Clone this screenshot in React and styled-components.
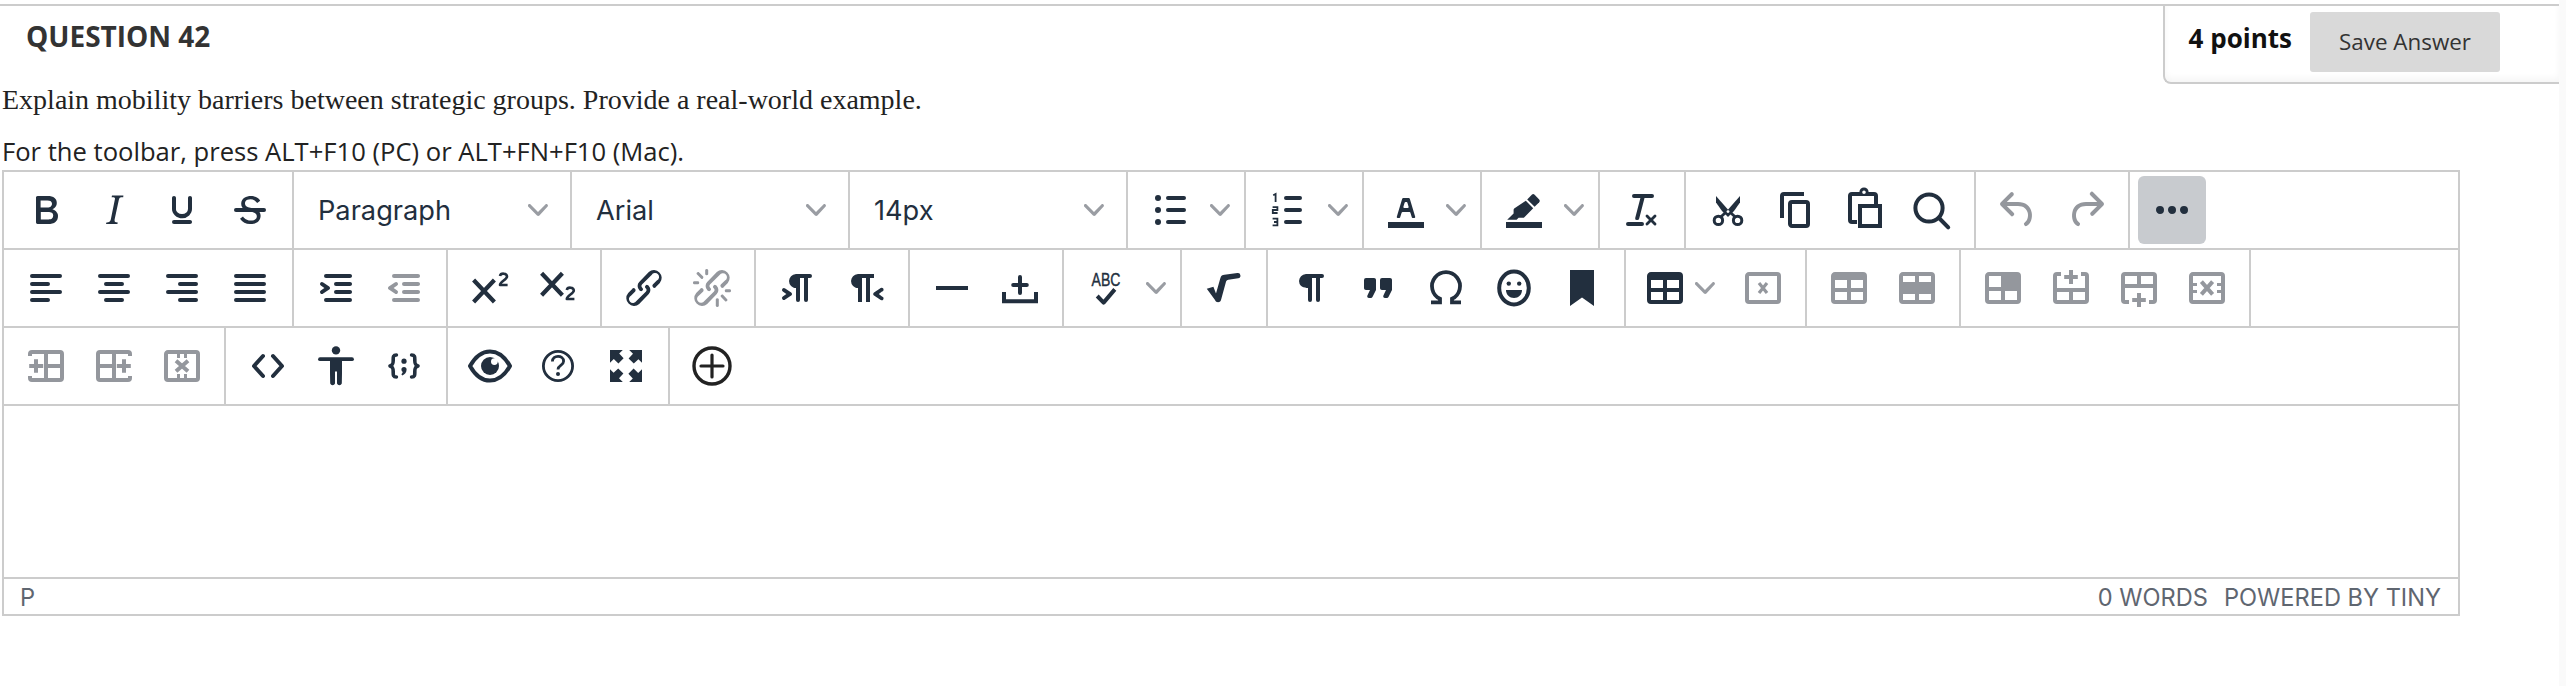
import React from 'react';
import styled, { createGlobalStyle } from 'styled-components';

const Global = createGlobalStyle`
  html, body { margin: 0; padding: 0; background: #fff; overflow: hidden; }
  body { font-family: "Open Sans", "Liberation Sans", sans-serif; color: #222; }
`;
const Page = styled.div`display: flex; width: 2566px; height: 686px; background: #fff;`;
const Main = styled.main`flex: 1; min-width: 0; padding-top: 4px;`;
const Track = styled.div`width: 7px; background: #fafafa;`;
const Header = styled.header`display: flex; justify-content: space-between; align-items: flex-start; height: 78px; border-top: 2px solid #ccc;`;
const Title = styled.h2`margin: 12px 0 0 26px; font: 700 28px/36px "Open Sans", sans-serif; color: #333;`;
const Points = styled.div`display: flex; align-items: flex-start; gap: 18px; height: 78px; box-sizing: border-box; padding: 6px 59px 0 24px; border-left: 2px solid #ccc; border-bottom: 2px solid #ccc; border-bottom-left-radius: 8px; box-shadow: 0 -4px 6px rgba(0,0,0,.04) inset;`;
const PointsLabel = styled.b`font: 700 26px/52px "Open Sans", sans-serif; color: #111;`;
const SaveButton = styled.button`width: 190px; height: 60px; border: 0; border-radius: 3px; background: #d9d9d9; color: #333; font: 400 22.4px/60px "Open Sans", sans-serif; padding: 0;`;
const Prompt = styled.p`margin: 0 0 0 2px; font: 400 28px/32px "Liberation Serif", serif; color: #222; height: 40px; `;
const Hint = styled.p`margin: 0 0 0 2px; font: 400 25.6px/34px "Open Sans", sans-serif; color: #222; height: 46px; padding-top: 11px; box-sizing: border-box;`;
const Editor = styled.section`width: 2458px; margin-left: 2px; box-sizing: border-box; border: 2px solid #ccc; background: #fff;`;
const Row = styled.div`display: flex; height: 78px; box-sizing: border-box; border-bottom: 2px solid #ccc;`;
const Group = styled.div`display: flex; align-items: center; padding: 0 8px; height: 76px; border-right: ${p => p.$last ? '0' : '2px solid #ccc'};`;
const IconBtn = styled.button`
  display: flex; align-items: center; justify-content: center; width: 68px; height: 68px; padding: 0; border: 0; border-radius: 6px;
  background: ${p => p.$active ? '#c8cbcf' : 'transparent'};
  color: ${p => p.$off ? '#94979d' : p.$ink || '#222f3e'};
`;
const Caret = styled.span`display: flex; align-items: center; justify-content: center; width: 32px; height: 68px; color: #9a9da3;`;
const TableMenu = styled.button`display: flex; align-items: center; width: 95px; height: 68px; padding: 0 0 0 7px; border: 0; background: transparent; color: #222f3e; box-sizing: border-box; gap: 6px;`;
const TableCaret = styled.span`display: flex; color: #9a9da3;`;
const Select = styled.button`display: flex; align-items: center; justify-content: space-between; width: 260px; height: 68px; box-sizing: border-box; padding: 2px 14px 0 16px; border: 0; background: transparent; color: #222f3e; font: 400 27.2px/40px Inter, "Liberation Sans", sans-serif;`;
const SelectCaret = styled.span`display: flex; margin-top: -2px; color: #9a9da3;`;
const Body = styled.div`height: 171px;`;
const Status = styled.footer`display: flex; justify-content: space-between; align-items: center; height: 37px; box-sizing: border-box; padding: 2px 17px 0 16px; border-top: 2px solid #ccc; color: #5f6670; font: 400 23.6px/30px Inter, "Liberation Sans", sans-serif;`;
const StatusRight = styled.div`display: flex; gap: 16px;`;

const F = ({ d, ...r }) => <path d={d} fillRule="evenodd" {...r} />;
const S = ({ d, w = 2, ...r }) => <path d={d} fill="none" stroke="currentColor" strokeWidth={w} strokeLinecap="round" strokeLinejoin="round" {...r} />;
const T = 'M5 4h14a2 2 0 0 1 2 2v12a2 2 0 0 1-2 2H5a2 2 0 0 1-2-2V6c0-1.1.9-2 2-2z';
const PIL = 'M10 5h8a1 1 0 0 1 0 2h-1v11a1 1 0 0 1-2 0V7h-2v11a1 1 0 0 1-2 0v-6c-.5 0-1 0-1.4-.3A3.4 3.4 0 0 1 6.8 10a3.3 3.3 0 0 1 0-2.8 3.4 3.4 0 0 1 1.8-1.8L10 5z';
const BAR = 'M3 18h18v3H3z';
const cut = <g><F d="M6 5l7.6 8.6-1.7 1.8-2.9-2.9L6 8.2z" /><S d="M10.4 13.6l-1.9 1.8" w={1.4} /><circle cx="7.2" cy="17.2" r="2.1" fill="none" stroke="currentColor" strokeWidth="1.5" /></g>;

const icons = {
  bold: <F d="M7.8 19c-.3 0-.5 0-.6-.2l-.2-.5V5.7c0-.2 0-.4.2-.5l.6-.2h5c1.5 0 2.7.3 3.5 1 .7.6 1.1 1.4 1.1 2.5a3 3 0 0 1-.6 1.9c-.4.6-1 1-1.6 1.2.4.1.9.3 1.3.6s.8.7 1 1.2c.4.4.5 1 .5 1.6 0 1.3-.4 2.3-1.3 3-.8.7-2.1 1-3.8 1H7.8zm5-8.3c.6 0 1.2-.1 1.6-.5.4-.3.6-.7.6-1.3 0-1.1-.8-1.7-2.3-1.7H9.3v3.5h3.4zm.5 6c.7 0 1.3-.1 1.7-.4.4-.4.6-.9.6-1.5s-.2-1-.7-1.4c-.4-.3-1-.4-2-.4H9.4v3.8h4z" />,
  italic: <F d="M16.7 4.7l-.1.9h-.3c-.6 0-1 0-1.4.3-.3.3-.4.6-.5 1.1l-2.1 9.8v.6c0 .5.4.8 1.4.8h.2l-.2.8H8l.2-.8h.2c1.1 0 1.8-.5 2-1.5l2-9.8.1-.5c0-.6-.4-.8-1.4-.8h-.3l.2-.9h5.8z" />,
  underline: <F d="M16 5c.6 0 1 .4 1 1v5.5a4 4 0 0 1-.4 1.8l-1 1.4a5.3 5.3 0 0 1-5.5 1 5 5 0 0 1-1.6-1c-.5-.4-.8-.9-1.1-1.4a4 4 0 0 1-.4-1.8V6c0-.6.4-1 1-1s1 .4 1 1v5.5c0 .3 0 .6.2 1l.6.7a3.3 3.3 0 0 0 2.2.8 3.4 3.4 0 0 0 2.2-.8c.3-.2.4-.5.6-.8l.2-.9V6c0-.6.4-1 1-1zM8 17h8c.6 0 1 .4 1 1s-.4 1-1 1H8a1 1 0 0 1 0-2z" />,
  strike: <><F d="M15.6 8.5c-.5-.7-1-1.1-1.3-1.3-.6-.4-1.3-.6-2-.6-2.7 0-2.8 1.7-2.8 2.1 0 1.6 1.8 2 3.2 2.3 4.4.9 4.6 2.8 4.6 3.9 0 1.4-.7 4.1-5 4.1A6.2 6.2 0 0 1 7 16.4l1.5-1.1c.4.6 1.6 2 3.7 2 1.6 0 2.5-.4 3-1.2.4-.8.3-2-.8-2.6-.7-.4-1.6-.7-2.9-1-1-.2-3.9-.8-3.9-3.6C7.6 6 10.3 5 12.4 5c2.9 0 4.2 1.6 4.7 2.4l-1.5 1.1z" /><S d="M5 12h14" /></>,
  bullist: <><S d="M11 6h8M11 12h8M11 18h8" /><circle cx="6" cy="6" r="1.5" /><circle cx="6" cy="12" r="1.5" /><circle cx="6" cy="18" r="1.5" /></>,
  numlist: <><S d="M11 6h7M11 12h7M11 18h7" /><S w={.9} d="M4.6 4.6l1.2-.6v4M4.3 10.6h2.4v1.4H4.4v1.5h2.4M4.3 16.3h2.4v3.4H4.3M5 18h1.7" strokeLinecap="butt" strokeLinejoin="miter" /></>,
  forecolor: <><path d={BAR} /><F d="M8.7 16h-.8a.5.5 0 0 1-.5-.6l2.7-9c.1-.3.3-.4.5-.4h2.8c.2 0 .4.1.5.4l2.7 9a.5.5 0 0 1-.5.6h-.8a.5.5 0 0 1-.4-.4l-.7-2.2c0-.3-.3-.4-.5-.4h-3.4c-.2 0-.4.1-.5.4l-.7 2.2c0 .3-.2.4-.4.4zm2.6-7.6l-.6 2a.5.5 0 0 0 .5.6h1.6a.5.5 0 0 0 .5-.6l-.6-2c0-.3-.3-.4-.5-.4h-.4c-.2 0-.4.1-.5.4z" /></>,
  highlight: <><path d={BAR} /><path d="M15.9 4.4a1 1 0 0 1 1.4 0l2.3 2.3a1 1 0 0 1 0 1.4l-2.3 2.3-3.7-3.7z" /><path d="M12.9 7.4l3.7 3.7-4.4 4.5a1 1 0 0 1-.7.3H9.3l-1 1H3.6l3.2-3.2v-1.8a1 1 0 0 1 .3-.7z" /></>,
  removeformat: <F d="M13.2 6a1 1 0 0 1 0 .2l-2.6 10a1 1 0 0 1-1 .8h-.2a.8.8 0 0 1-.8-1l2.6-10H8a1 1 0 1 1 0-2h9a1 1 0 0 1 0 2h-3.8zM5 18h7a1 1 0 0 1 0 2H5a1 1 0 0 1 0-2zm13 1.5L16.5 18 15 19.5a.7.7 0 0 1-1-1l1.5-1.5-1.5-1.5a.7.7 0 0 1 1-1l1.5 1.5 1.5-1.5a.7.7 0 0 1 1 1L17.5 17l1.5 1.5a.7.7 0 0 1-1 1z" />,
  cut: <>{cut}<g transform="matrix(-1 0 0 1 24 0)">{cut}</g><circle cx="12" cy="12.8" r=".7" fill="#fff" /></>,
  copy: <F d="M16 3H6a2 2 0 0 0-2 2v11h2V5h10V3zm1 4H10a2 2 0 0 0-2 2v10c0 1.1.9 2 2 2h7a2 2 0 0 0 2-2V9a2 2 0 0 0-2-2zm0 12H10V9h7v10z" />,
  paste: <F d="M9.7 3a2.3 2.3 0 0 1 4.6 0H17a2 2 0 0 1 2 2v4h-2V5H6v12h2.5v2H6a2 2 0 0 1-2-2V5a2 2 0 0 1 2-2h3.7zM12 2.2a.9.9 0 1 0 0 1.8.9.9 0 0 0 0-1.8zM9 9h12v12H9V9zm2 2v8h8v-8h-8z" />,
  search: <><circle cx="10.5" cy="11" r="6.8" fill="none" stroke="currentColor" strokeWidth="2" /><S d="M15.5 16l4.6 4.7" /></>,
  undo: <F d="M6.4 8H12c3.7 0 6.2 2 6.8 5.1.6 2.7-.4 5.6-2.3 6.8a1 1 0 0 1-1-1.8c1.1-.7 1.8-2.7 1.4-4.6-.5-2.1-2.1-3.5-4.9-3.5H6.4l3.3 3.3a1 1 0 1 1-1.4 1.4l-5-5a1 1 0 0 1 0-1.4l5-5a1 1 0 0 1 1.4 1.4L6.4 8z" />,
  redo: <F d="M17.6 10H12c-2.8 0-4.4 1.4-4.9 3.5-.4 2 .3 3.9 1.4 4.6a1 1 0 1 1-1 1.8c-2-1.2-2.9-4.1-2.3-6.8.6-3 3-5.1 6.8-5.1h5.6l-3.3-3.3a1 1 0 1 1 1.4-1.4l5 5a1 1 0 0 1 0 1.4l-5 5a1 1 0 0 1-1.4-1.4l3.3-3.3z" />,
  more: <F d="M6 10a2 2 0 0 0-2 2c0 1.1.9 2 2 2a2 2 0 0 0 2-2 2 2 0 0 0-2-2zm12 0a2 2 0 0 0-2 2c0 1.1.9 2 2 2a2 2 0 0 0 2-2 2 2 0 0 0-2-2zm-6 0a2 2 0 0 0-2 2c0 1.1.9 2 2 2a2 2 0 0 0 2-2 2 2 0 0 0-2-2z" />,
  left: <S d="M5 6h14M5 10h8M5 14h14M5 18h8" />,
  center: <S d="M5 6h14M8 10h8M5 14h14M8 18h8" />,
  right: <S d="M5 6h14M11 10h8M5 14h14M11 18h8" />,
  justify: <S d="M5 6h14M5 10h14M5 14h14M5 18h14" />,
  indent: <F d="M7 5h12c.6 0 1 .4 1 1s-.4 1-1 1H7a1 1 0 1 1 0-2zm5 4h7c.6 0 1 .4 1 1s-.4 1-1 1h-7a1 1 0 0 1 0-2zm0 4h7c.6 0 1 .4 1 1s-.4 1-1 1h-7a1 1 0 0 1 0-2zm-5 4h12a1 1 0 0 1 0 2H7a1 1 0 0 1 0-2zm-2.6-3.8L6.2 12l-1.8-1.2a1 1 0 0 1 1.2-1.6l3 2a1 1 0 0 1 0 1.6l-3 2a1 1 0 1 1-1.2-1.6z" />,
  outdent: <F d="M7 5h12c.6 0 1 .4 1 1s-.4 1-1 1H7a1 1 0 1 1 0-2zm5 4h7c.6 0 1 .4 1 1s-.4 1-1 1h-7a1 1 0 0 1 0-2zm0 4h7c.6 0 1 .4 1 1s-.4 1-1 1h-7a1 1 0 0 1 0-2zm-5 4h12a1 1 0 0 1 0 2H7a1 1 0 0 1 0-2zm1.6-3.8a1 1 0 0 1-1.2 1.6l-3-2a1 1 0 0 1 0-1.6l3-2a1 1 0 0 1 1.2 1.6L6.8 12l1.8 1.2z" />,
  sup: <><S d="M3.8 8l10.4 11M14.2 8L3.8 19" w={2.1} strokeLinecap="butt" /><S d="M17 6c.3-1.6 3.5-1.6 3.5.3 0 1.6-3.5 2.4-3.5 4.2h3.8" w={1.3} strokeLinecap="butt" /></>,
  sub: <><S d="M3.8 4.6l10.4 11M14.2 4.6L3.8 15.6" w={2.1} strokeLinecap="butt" /><S d="M16.4 13c.3-1.6 3.5-1.6 3.5.3 0 1.6-3.5 2.4-3.5 4.2h3.8" w={1.3} strokeLinecap="butt" /></>,
  link: <F d="M6.2 12.3a1 1 0 0 1 1.4 1.4l-2 2a2 2 0 1 0 2.6 2.8l4.8-4.8a1 1 0 0 0 0-1.4 1 1 0 1 1 1.4-1.3 2.9 2.9 0 0 1 0 4L9.6 20a3.9 3.9 0 0 1-5.5-5.5l2-2zm11.6-.6a1 1 0 0 1-1.4-1.4l2-2a2 2 0 1 0-2.6-2.8L11 10.3a1 1 0 0 0 0 1.4A1 1 0 1 1 9.6 13a2.9 2.9 0 0 1 0-4L14.4 4a3.9 3.9 0 0 1 5.5 5.5l-2 2z" />,
  unlink: <path d="M6.2 12.3a1 1 0 0 1 1.4 1.4l-2.1 2a2 2 0 1 0 2.7 2.8l4.8-4.8a1 1 0 0 0 0-1.4 1 1 0 1 1 1.4-1.3 2.9 2.9 0 0 1 0 4L9.6 20a3.9 3.9 0 0 1-5.5-5.5l2-2zm11.6-.6a1 1 0 0 1-1.4-1.4l2.1-2a2 2 0 1 0-2.7-2.8L11 10.3a1 1 0 0 0 0 1.4A1 1 0 1 1 9.6 13a2.9 2.9 0 0 1 0-4L14.4 4a3.9 3.9 0 0 1 5.5 5.5l-2 2zM7.6 6.3a.8.8 0 0 1-1 1.1L4.3 5a.8.8 0 0 1 1-1l2.3 2.2zM5.1 8.6a.8.8 0 0 1 0 1.5H3a.8.8 0 0 1 0-1.5H5zm5-3.5a.8.8 0 0 1-1.5 0V3a.8.8 0 0 1 1.5 0v2zm6.3 11.3a.8.8 0 0 1 1-1.1l2.3 2.4a.8.8 0 0 1-1 1l-2.3-2.3zm2.5-2.3a.8.8 0 0 1 0-1.5H21a.8.8 0 0 1 0 1.5h-2zm-5 3.5a.8.8 0 0 1 1.5 0V21a.8.8 0 0 1-1.5 0v-2z" />,
  ltr: <F d="M11 5h7a1 1 0 0 1 0 2h-1v11a1 1 0 0 1-2 0V7h-2v11a1 1 0 0 1-2 0v-6c-.5 0-1 0-1.4-.3A3.4 3.4 0 0 1 7.8 10a3.3 3.3 0 0 1 0-2.8 3.4 3.4 0 0 1 1.8-1.8L11 5zM4.4 16.2L6.2 15l-1.8-1.2a1 1 0 0 1 1.2-1.6l3 2a1 1 0 0 1 0 1.6l-3 2a1 1 0 1 1-1.2-1.6z" />,
  rtl: <F d="M8 5h8v2h-2v12h-2V7h-2v12H8v-7c-.5 0-1 0-1.4-.3A3.4 3.4 0 0 1 4.8 10a3.3 3.3 0 0 1 0-2.8 3.4 3.4 0 0 1 1.8-1.8L8 5zm12 11.2a1 1 0 1 1-1 1.6l-3-2a1 1 0 0 1 0-1.6l3-2a1 1 0 1 1 1 1.6L18.4 15l1.6 1.2z" />,
  hr: <path d="M4 11h16v2H4z" />,
  pagebreak: <><path d="M3 14h2v3.6h14V14h2v5.6H3z" /><S d="M12 6.5v8M8.6 10.5h6.8" /></>,
  spell: <><text x="4.8" y="10.8" fontFamily="'Liberation Sans', sans-serif" fontSize="9.2" stroke="currentColor" strokeWidth=".2" textLength="14.4" lengthAdjust="spacingAndGlyphs">ABC</text><S d="M7.6 16l3.2 3.3 5.6-6.6" w={2} strokeLinecap="butt" /></>,
  math: <path d="M3.4 12.4l3.3-1 1.3 3.4 2.2-7.800c.3-1.100 1-1.500 2-1.600l6.500-.9a1.300 1.300 0 0 1 .4 2.600l-4.900.8c-.7.1-1 .4-1.200 1L10.500 18c-.4 1.500-2.500 1.500-3 0z" />,
  pilcrow: <F d={PIL} />,
  quote: <F d="M7.5 17h.9c.4 0 .7-.2.9-.6L11 13V8c0-.6-.4-1-1-1H6a1 1 0 0 0-1 1v4c0 .6.4 1 1 1h2l-1.3 2.7a1 1 0 0 0 .8 1.3zm8 0h.9c.4 0 .7-.2.9-.6L19 13V8c0-.6-.4-1-1-1h-4a1 1 0 0 0-1 1v4c0 .6.4 1 1 1h2l-1.3 2.7a1 1 0 0 0 .8 1.3z" />,
  omega: <S d="M4.5 19.2H9V17.4A7 7 0 1 1 15 17.4v1.8h4.5" w={1.9} strokeLinecap="butt" strokeLinejoin="miter" />,
  emoji: <><ellipse cx="12" cy="12" rx="7.4" ry="8.2" fill="none" stroke="currentColor" strokeWidth="2" /><circle cx="9.4" cy="9.8" r="1.1" /><circle cx="14.6" cy="9.8" r="1.1" /><path d="M8 13h8c0 2.4-1.8 4-4 4s-4-1.6-4-4z" /></>,
  bookmark: <path d="M6 3h12v18l-6-4.2L6 21z" />,
  table: <F d="M19 4a2 2 0 0 1 2 2v12a2 2 0 0 1-2 2H5a2 2 0 0 1-2-2V6c0-1.1.9-2 2-2h14zM5 14v4h6v-4H5zm14 0h-6v4h6v-4zm0-6h-6v4h6V8zM5 12h6V8H5v4z" />,
  tabledel: <><F d={T + 'M5 6v12h14V6H5z'} /><S d="M10 9.5l4 5M14 9.5l-4 5" w={1.6} strokeLinecap="butt" /></>,
  cellprops: <F d={T + 'M5 8v4h6V8zM13 8v4h6V8zM5 14v4h6v-4zM13 14v4h6v-4z'} />,
  rowprops: <F d={T + 'M5 6v3h6V6zM13 6v3h6V6zM5 15v3h6v-3zM13 15v3h6v-3z'} />,
  cellsel: <F d={T + 'M5 6v5.5h6V6zM5 13.5V18h6v-4.5zM13 13.5V18h6v-4.5z'} />,
  rowabove: <><F d="M3 6a2 2 0 0 1 2-2h2v2H5v6h14V6h-2V4h2a2 2 0 0 1 2 2v12a2 2 0 0 1-2 2H5a2 2 0 0 1-2-2zM5 14v4h6v-4zM13 14v4h6v-4z" /><S d="M12 3v7M8.6 6.5h6.8" w={2} strokeLinecap="butt" /></>,
  rowbelow: <g transform="matrix(1 0 0 -1 0 24)"><F d="M3 6a2 2 0 0 1 2-2h2v2H5v6h14V6h-2V4h2a2 2 0 0 1 2 2v12a2 2 0 0 1-2 2H5a2 2 0 0 1-2-2zM5 14v4h6v-4zM13 14v4h6v-4z" /><S d="M12 2.5v7M8.6 6h6.8" w={2} strokeLinecap="butt" /></g>,
  rowdel: <><F d={T + 'M5 6v3.5h2V11H5v2h2v1.5H5V18h14v-3.5h-2V13h2v-2h-2V9.5h2V6z'} /><S d="M9.2 8.8l5.6 6.4M14.8 8.8l-5.6 6.4" w={2} strokeLinecap="butt" /></>,
  colbefore: <><F d="M3 6a2 2 0 0 1 2-2h14a2 2 0 0 1 2 2v12a2 2 0 0 1-2 2H5a2 2 0 0 1-2-2v-1h2v1h6V6H5v1H3zM13 6v5h6V6zM13 13v5h6v-5z" /><S d="M3.6 12h7M7 8.6v6.8" w={2} strokeLinecap="butt" /></>,
  colafter: <g transform="matrix(-1 0 0 1 24 0)"><F d="M3 6a2 2 0 0 1 2-2h14a2 2 0 0 1 2 2v12a2 2 0 0 1-2 2H5a2 2 0 0 1-2-2v-1h2v1h6V6H5v1H3zM13 6v5h6V6zM13 13v5h6v-5z" /><S d="M3.6 12h7M7 8.6v6.8" w={2} strokeLinecap="butt" /></g>,
  coldel: <><F d={T + 'M5 6v12h4.5v-2H11v2h2v-2h1.5v2H19V6h-4.5v2H13V6h-2v2H9.5V6z'} /><S d="M9 9.4l6 5.2M15 9.4l-6 5.2" w={2} strokeLinecap="butt" /></>,
  code: <S d="M9.5 7L5 12l4.5 5M14.5 7l4.5 5-4.5 5" w={2} />,
  access: <><circle cx="12" cy="4.2" r="2.1" /><S d="M4 8.6h16" w={1.9} /><path d="M9 8.6h6v7l-.1 5.2a1.3 1.3 0 0 1-2.4 0v-6h-1v6a1.3 1.3 0 0 1-2.4 0L9 15.6z" /></>,
  template: <><S d="M8.2 6.5C6.5 6.5 6.6 7.6 6.6 9s.1 2.4-1.6 3c1.7.6 1.6 1.6 1.6 3s-.1 2.5 1.6 2.5M15.8 6.5c1.700 0 1.600 1.100 1.600 2.500s-.1 2.400 1.600 3c-1.700.6-1.600 1.600-1.600 3s.1 2.500-1.600 2.500" w={1.8} /><circle cx="12" cy="9.600" r="1.300" /><path d="M10.700 13.800a1.300 1.300 0 0 1 2.600 0c0 1.400-.9 2.600-2.200 3l-.4-.7c.4-.4.6-.7.7-1.100a1.300 1.300 0 0 1-.7-1.200z" /></>,
  eye: <><path d="M2 12c2.800-5 6.300-7.300 10-7.300S19.200 7 22 12c-2.800 5-6.300 7.300-10 7.300S4.800 17 2 12z" fill="none" stroke="currentColor" strokeWidth="2" strokeLinejoin="round" /><circle cx="12" cy="12" r="4.500" /><circle cx="14.200" cy="9.800" r="1.700" fill="#fff" /></>,
  help: <><circle cx="12" cy="12" r="7.300" fill="none" stroke="currentColor" strokeWidth="1.400" /><S d="M9.200 9.800c0-3.500 5.600-3.500 5.600-.2 0 2.200-2.800 2-2.800 4.100" w={1.400} strokeLinecap="butt" /><circle cx="12" cy="16" r="1" /></>,
  fullscreen: <>{[0, 90, 180, 270].map(a => <path key={a} transform={`rotate(${a} 12 12)`} d="M4 4h6.400L8.600 5.800l2.200 2.300-2.600 2.600-2.300-2.200L4 10.400z" />)}</>,
  plus: <><circle cx="12" cy="12" r="9" fill="none" stroke="currentColor" strokeWidth="1.700" /><S d="M12 6.500v11M6.500 12h11" w={1.600} /></>,
};

const Icon = ({ name }) => <svg width="48" height="48" viewBox="0 0 24 24" fill="currentColor">{icons[name]}</svg>;
const Chevron = () => <svg width="20" height="20" viewBox="0 0 10 10" fill="currentColor"><path d="M8.700 2.200c.3-.3.8-.3 1 0 .4.4.4.9 0 1.200L5.700 7.800c-.3.3-.9.3-1.200 0L.2 3.400a.8.8 0 0 1 0-1.200c.3-.3.8-.3 1.100 0L5 6l3.700-3.800z" /></svg>;

const Btn = ({ name, off, active, ink }) => <IconBtn $off={off} $active={active} $ink={ink} aria-label={name}><Icon name={name} /></IconBtn>;
const Split = ({ name }) => <><Btn name={name} /><Caret><Chevron /></Caret></>;
const Pick = ({ label }) => <Select>{label}<SelectCaret><Chevron /></SelectCaret></Select>;

const plain = names => names.map(n => n.startsWith('~') ? <Btn key={n} name={n.slice(1)} off /> : <Btn key={n} name={n} />);

export default function App() {
  return (
    <Page>
      <Global />
      <Main>
        <Header>
          <Title>QUESTION 42</Title>
          <Points>
            <PointsLabel>4 points</PointsLabel>
            <SaveButton>Save Answer</SaveButton>
          </Points>
        </Header>
        <Prompt>Explain mobility barriers between strategic groups. Provide a real-world example.</Prompt>
        <Hint>For the toolbar, press ALT+F10 (PC) or ALT+FN+F10 (Mac).</Hint>
        <Editor>
          <Row>
            <Group>{plain(['bold', 'italic', 'underline', 'strike'])}</Group>
            <Group><Pick label="Paragraph" /></Group>
            <Group><Pick label="Arial" /></Group>
            <Group><Pick label="14px" /></Group>
            <Group><Split name="bullist" /></Group>
            <Group><Split name="numlist" /></Group>
            <Group><Split name="forecolor" /></Group>
            <Group><Split name="highlight" /></Group>
            <Group><Btn name="removeformat" /></Group>
            <Group>{plain(['cut', 'copy', 'paste', 'search'])}</Group>
            <Group>{plain(['~undo', '~redo'])}</Group>
            <Group $last><Btn name="more" active /></Group>
          </Row>
          <Row>
            <Group>{plain(['left', 'center', 'right', 'justify'])}</Group>
            <Group>{plain(['indent', '~outdent'])}</Group>
            <Group>{plain(['sup', 'sub'])}</Group>
            <Group>{plain(['link', '~unlink'])}</Group>
            <Group>{plain(['ltr', 'rtl'])}</Group>
            <Group>{plain(['hr', 'pagebreak'])}</Group>
            <Group><Split name="spell" /></Group>
            <Group><Btn name="math" /></Group>
            <Group>{plain(['pilcrow', 'quote', 'omega', 'emoji', 'bookmark'])}</Group>
            <Group>
              <TableMenu aria-label="table"><Icon name="table" /><TableCaret><Chevron /></TableCaret></TableMenu>
              <Btn name="tabledel" off />
            </Group>
            <Group>{plain(['~cellprops', '~rowprops'])}</Group>
            <Group>{plain(['~cellsel', '~rowabove', '~rowbelow', '~rowdel'])}</Group>
          </Row>
          <Row>
            <Group>{plain(['~colbefore', '~colafter', '~coldel'])}</Group>
            <Group>{plain(['code', 'access', 'template'])}</Group>
            <Group>{plain(['eye', 'help', 'fullscreen'])}</Group>
            <Group $last><Btn name="plus" ink="#222" /></Group>
          </Row>
          <Body />
          <Status>
            <span>P</span>
            <StatusRight><span>0 WORDS</span><span>POWERED BY TINY</span></StatusRight>
          </Status>
        </Editor>
      </Main>
      <Track />
    </Page>
  );
}
